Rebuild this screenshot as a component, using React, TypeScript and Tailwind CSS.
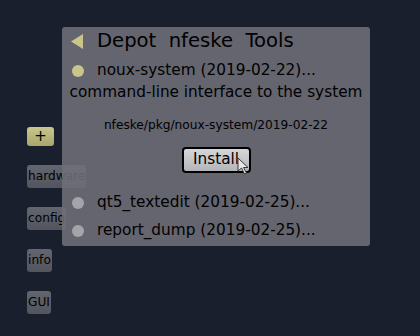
const FONT = { fontFamily: '"DejaVu Sans", Verdana, sans-serif' }

const SIDE_BUTTONS = ['hardware', 'config', 'info', 'GUI']

const PACKAGES = [
  { name: 'qt5_textedit (2019-02-25)...' },
  { name: 'report_dump (2019-02-25)...' },
]

function Dot({ active }: { active?: boolean }) {
  return (
    <span
      className={
        'ml-[10px] mr-[13px] h-[12px] w-[12px] shrink-0 rounded-full ' +
        (active ? 'bg-[#c9c58c]' : 'bg-[#a4a5ab]')
      }
    />
  )
}

function Cursor() {
  return (
    <svg className="absolute left-[237px] top-[157px]" width="16" height="20" viewBox="0 0 16 20">
      <path d="M1 1 L1 14 L4.5 11 L7.5 17 L9.5 16 L6.5 10.5 L11 10.5 Z" fill="#e6e6e6" stroke="#3a3a3a" strokeWidth="1" />
    </svg>
  )
}

export default function App() {
  return (
    <div className="relative h-[336px] w-[420px] overflow-hidden bg-[#1a1f2e] text-black" style={FONT}>
      {/* side menu */}
      <div className="flex flex-col items-start gap-[19px] pl-[27px] pt-[127px]">
        <div className="flex h-[19px] w-[27px] items-center justify-center rounded-[3px] bg-gradient-to-b from-[#c9c68e] to-[#a9a66c] text-[15px] leading-none">
          +
        </div>
        {SIDE_BUTTONS.map((b) => (
          <div
            key={b}
            className="flex h-[23px] items-center rounded-[3px] bg-gradient-to-b from-[#64666f] to-[#52545e] px-[1px] text-[12.2px] leading-none text-black"
          >
            {b}
          </div>
        ))}
      </div>

      {/* depot window */}
      <div className="absolute left-[62px] top-[27px] flex w-[308px] flex-col rounded-[3px] bg-[#6e7079]/[0.88] pb-[1px]">
        <div className="flex h-[28px] items-center">
          <svg className="ml-[9px] mr-[14px] shrink-0" width="12" height="15" viewBox="0 0 12 15">
            <path d="M12 0 L12 15 L0 7.5 Z" fill="#c9c58c" />
          </svg>
          <span className="whitespace-pre text-[19.6px] leading-none">{'Depot  nfeske  Tools'}</span>
        </div>

        <div className="mt-[2px] flex h-[28px] items-center">
          <Dot active />
          <span className="text-[15.3px] leading-none">noux-system (2019-02-22)...</span>
        </div>

        <div className="flex h-[16px] items-center justify-center text-[15.3px] leading-none">
          command-line interface to the system
        </div>

        <div className="mt-[15px] flex h-[18px] items-center justify-center text-[12.2px] leading-none">
          nfeske/pkg/noux-system/2019-02-22
        </div>

        <div className="mt-[13px] flex justify-center">
          <div className="flex h-[26px] w-[69px] items-center justify-center rounded-[4px] border-2 border-black bg-gradient-to-b from-[#d6d7d9] to-[#b4b5b9] text-[15.3px] leading-none">
            Install
          </div>
        </div>

        <div className="mt-[16px]">
          {PACKAGES.map((p) => (
            <div key={p.name} className="flex h-[28px] items-center">
              <Dot />
              <span className="text-[15.3px] leading-none">{p.name}</span>
            </div>
          ))}
        </div>
      </div>

      <Cursor />
    </div>
  )
}
